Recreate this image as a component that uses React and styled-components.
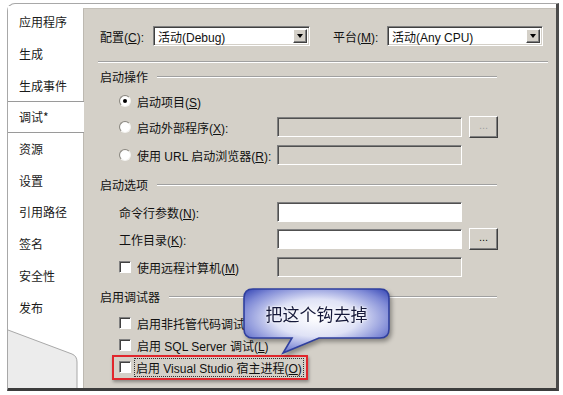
import styled, { createGlobalStyle } from "styled-components";

const GlobalStyle = createGlobalStyle`
  html, body {
    margin: 0;
    padding: 0;
    background: #ffffff;
  }
  body {
    font-family: "Liberation Sans", "Noto Sans CJK SC", sans-serif;
    font-size: 12px;
    color: #111;
  }
`;

const TABS = [
  "应用程序",
  "生成",
  "生成事件",
  "调试*",
  "资源",
  "设置",
  "引用路径",
  "签名",
  "安全性",
  "发布",
];

const App = () => {
  return (
    <Page>
      <GlobalStyle />
      <Frame>
        <TabList>
          {TABS.map((t) => (
            <Tab key={t} $active={t === "调试*"}>
              {t}
            </Tab>
          ))}
          <TabFoot>
            <svg width="75" height="64" viewBox="0 0 75 64">
              <path d="M0,6 L64,30 Q69,32 69,38 L69,64 L0,64 Z" fill="#ececec" />
              <path
                d="M0,6 L64,30 Q69,32 69,38 L69,64"
                fill="none"
                stroke="#a8a8a8"
                strokeWidth="1"
              />
            </svg>
          </TabFoot>
        </TabList>

        <Panel>
          <ConfigRow>
            <Label $w={53}>
              配置(<u>C</u>):
            </Label>
            <Combo $w={157}>
              <ComboText>活动(Debug)</ComboText>
              <ComboButton>
                <Arrow />
              </ComboButton>
            </Combo>
            <Label $w={54} style={{ marginLeft: 23 }}>
              平台(<u>M</u>):
            </Label>
            <Combo $w={156}>
              <ComboText>活动(Any CPU)</ComboText>
              <ComboButton>
                <Arrow />
              </ComboButton>
            </Combo>
          </ConfigRow>

          <Row $h={10}>
            <Separator />
          </Row>

          <Row $h={20}>
            <GroupHeader>
              <span>启动操作</span>
              <EtchedLine />
            </GroupHeader>
          </Row>

          <Row $h={30}>
            <FieldGrid>
              <Choice>
                <Radio $checked />
                <span>
                  启动项目(<u>S</u>)
                </span>
              </Choice>
            </FieldGrid>
          </Row>
          <Row $h={22}>
            <FieldGrid>
              <Choice>
                <Radio />
                <span>
                  启动外部程序(<u>X</u>):
                </span>
              </Choice>
              <TextBox />
              <Browse $disabled>...</Browse>
            </FieldGrid>
          </Row>
          <Row $h={34}>
            <FieldGrid>
              <Choice>
                <Radio />
                <span>
                  使用 URL 启动浏览器(<u>R</u>):
                </span>
              </Choice>
              <TextBox />
            </FieldGrid>
          </Row>

          <Row $h={24}>
            <GroupHeader>
              <span>启动选项</span>
              <EtchedLine />
            </GroupHeader>
          </Row>

          <Row $h={32}>
            <FieldGrid>
              <Choice>
                <span>
                  命令行参数(<u>N</u>):
                </span>
              </Choice>
              <TextBox $enabled />
            </FieldGrid>
          </Row>
          <Row $h={22}>
            <FieldGrid>
              <Choice>
                <span>
                  工作目录(<u>K</u>):
                </span>
              </Choice>
              <TextBox $enabled />
              <Browse>...</Browse>
            </FieldGrid>
          </Row>
          <Row $h={34}>
            <FieldGrid>
              <Choice>
                <CheckBox />
                <span>
                  使用远程计算机(<u>M</u>)
                </span>
              </Choice>
              <TextBox />
            </FieldGrid>
          </Row>

          <Row $h={24}>
            <GroupHeader>
              <span>启用调试器</span>
              <EtchedLine />
            </GroupHeader>
          </Row>

          <Row $h={30}>
            <Choice $pad={19}>
              <CheckBox />
              <span>启用非托管代码调试(<u>T</u>)</span>
            </Choice>
          </Row>
          <Row $h={14}>
            <Choice $pad={19}>
              <CheckBox />
              <span>
                启用 SQL Server 调试(<u>L</u>)
              </span>
            </Choice>
          </Row>
          <Row $h={30}>
            <Highlight>
              <CheckBox />
              <Focused>
                启用 Visual Studio 宿主进程(<u>O</u>)
              </Focused>
            </Highlight>
          </Row>

          <Callout>
            <svg width="150" height="70" viewBox="-2 -2 150 70">
              <defs>
                <radialGradient id="bubble" cx="50%" cy="45%" r="65%">
                  <stop offset="0%" stopColor="#ffffff" />
                  <stop offset="45%" stopColor="#dfe2f6" />
                  <stop offset="80%" stopColor="#7f8ad6" />
                  <stop offset="100%" stopColor="#3d4db8" />
                </radialGradient>
              </defs>
              <path
                d="M9,0 H136 Q145,0 145,9 V40 Q145,49 136,49 H75 L39,64 L48,49 H9 Q0,49 0,40 V9 Q0,0 9,0 Z"
                fill="url(#bubble)"
                stroke="#2f3f9e"
                strokeWidth="1.6"
              />
            </svg>
            <CalloutText>把这个钩去掉</CalloutText>
          </Callout>
        </Panel>
      </Frame>
    </Page>
  );
};

//styles
const Page = styled.div`
  width: 563px;
  height: 395px;
  padding: 3px 0 0 7px;
  box-sizing: border-box;
  background: #ffffff;
  overflow: hidden;
`;

const Frame = styled.div`
  display: flex;
  width: 552px;
  height: 388px;
  box-sizing: border-box;
  border-top: 1px solid #a8a8a8;
  border-left: 1px solid #a8a8a8;
  border-right: 3px solid #4a4a4a;
  border-bottom: 3px solid #3c3c3c;
  border-top-left-radius: 8px;
  background: #ffffff;
`;

const TabList = styled.div`
  width: 75px;
  flex: none;
  display: flex;
  flex-direction: column;
  padding-top: 2px;
  font-family: "Noto Sans CJK SC", sans-serif;
  font-size: 12px;
  color: #1a1a1a;
`;

const Tab = styled.div`
  height: 31.7px;
  box-sizing: border-box;
  display: flex;
  align-items: center;
  padding-left: 11px;
  margin-right: -1px;
  position: relative;
  background: #ffffff;
  border-top: 1px solid ${(p) => (p.$active ? "#9a9a9a" : "transparent")};
  border-bottom: 1px solid ${(p) => (p.$active ? "#9a9a9a" : "transparent")};
  z-index: ${(p) => (p.$active ? 1 : 0)};
`;

const TabFoot = styled.div`
  flex: 1;
  display: flex;
  align-items: flex-end;
  svg {
    display: block;
  }
`;

const Panel = styled.div`
  flex: 1;
  margin-top: 4px;
  position: relative;
  background: #d4d0c8;
  border-left: 1px solid #bdb9b1;
  border-top: 1px solid #c4c0b8;
  padding: 7px 0 0 16px;
  box-sizing: border-box;
`;

const Row = styled.div`
  height: ${(p) => p.$h}px;
  display: flex;
  align-items: center;
`;

const ConfigRow = styled(Row).attrs({ $h: 40 })``;

const Label = styled.span`
  width: ${(p) => p.$w}px;
  flex: none;
  white-space: nowrap;
`;

const Combo = styled.div`
  width: ${(p) => p.$w}px;
  height: 20px;
  box-sizing: border-box;
  display: flex;
  align-items: center;
  background: #ffffff;
  border: 1px solid;
  border-color: #808080 #ffffff #ffffff #808080;
  box-shadow: inset 1px 1px 0 #404040, inset -1px -1px 0 #d4d0c8;
  padding: 2px;
`;

const ComboText = styled.span`
  flex: 1;
  padding-left: 2px;
  white-space: nowrap;
`;

const ComboButton = styled.div`
  width: 14px;
  height: 14px;
  flex: none;
  display: flex;
  align-items: center;
  justify-content: center;
  background: #d4d0c8;
  border: 1px solid;
  border-color: #ffffff #404040 #404040 #ffffff;
  box-shadow: inset -1px -1px 0 #808080;
  box-sizing: border-box;
`;

const Arrow = styled.span`
  width: 0;
  height: 0;
  border-left: 3.5px solid transparent;
  border-right: 3.5px solid transparent;
  border-top: 4px solid #000;
`;

const Separator = styled.div`
  width: 450px;
  margin-left: -2px;
  height: 1px;
  background: #a0a0a0;
  box-shadow: 0 1px 0 #ffffff;
`;

const GroupHeader = styled.div`
  width: 397px;
  display: flex;
  align-items: center;
  gap: 9px;
  white-space: nowrap;
`;

const EtchedLine = styled.div`
  flex: 1;
  height: 1px;
  background: #a0a0a0;
  box-shadow: 0 1px 0 #ffffff;
`;

const FieldGrid = styled.div`
  display: grid;
  grid-template-columns: 151px 185px 29px;
  column-gap: 7px;
  align-items: center;
  padding-left: 19px;
`;

const Choice = styled.label`
  display: flex;
  align-items: center;
  gap: 6px;
  white-space: nowrap;
  padding-left: ${(p) => p.$pad || 0}px;
`;

const Radio = styled.span`
  width: 12px;
  height: 12px;
  flex: none;
  border-radius: 50%;
  box-sizing: border-box;
  background: radial-gradient(circle at 55% 55%, #ffffff 55%, #e6e4df 100%);
  border: 1px solid;
  border-color: #8a8780 #f4f3f0 #f4f3f0 #8a8780;
  display: flex;
  align-items: center;
  justify-content: center;
  &::after {
    content: "";
    width: 4px;
    height: 4px;
    border-radius: 50%;
    background: ${(p) => (p.$checked ? "#000" : "transparent")};
  }
`;

const CheckBox = styled.span`
  width: 12px;
  height: 12px;
  flex: none;
  box-sizing: border-box;
  background: #ffffff;
  border: 1px solid;
  border-color: #808080 #ffffff #ffffff #808080;
  box-shadow: inset 1px 1px 0 #404040;
`;

const TextBox = styled.div`
  height: 20px;
  box-sizing: border-box;
  background: ${(p) => (p.$enabled ? "#ffffff" : "#d4d0c8")};
  border: 1px solid;
  border-color: #808080 #ffffff #ffffff #808080;
  box-shadow: inset 1px 1px 0 #505050;
`;

const Browse = styled.div`
  width: 29px;
  height: 22px;
  box-sizing: border-box;
  display: flex;
  align-items: center;
  justify-content: center;
  background: #d4d0c8;
  border: 1px solid;
  border-color: #ffffff #404040 #404040 #ffffff;
  box-shadow: inset -1px -1px 0 #808080;
  color: ${(p) => (p.$disabled ? "#a0a0a0" : "#111")};
  font-size: 11px;
  line-height: 1;
  padding-bottom: 3px;
`;

const Highlight = styled.div`
  margin-left: 12px;
  width: 196px;
  height: 25px;
  box-sizing: border-box;
  display: flex;
  align-items: center;
  gap: 4px;
  padding-left: 5px;
  border: 2px solid #e1262c;
  box-shadow: 1px 2px 3px rgba(0, 0, 0, 0.35);
  white-space: nowrap;
`;

const Focused = styled.span`
  padding: 0 1px;
  outline: 1px dotted #333;
  outline-offset: 0;
`;

const Callout = styled.div`
  position: absolute;
  left: 158px;
  top: 278px;
  width: 150px;
  height: 70px;
  filter: drop-shadow(2px 3px 2px rgba(0, 0, 0, 0.35));
  svg {
    display: block;
  }
`;

const CalloutText = styled.div`
  position: absolute;
  left: 2px;
  top: 2px;
  width: 145px;
  height: 49px;
  display: flex;
  align-items: center;
  justify-content: center;
  font-family: "Noto Sans CJK SC", sans-serif;
  font-size: 17px;
  color: #15183a;
  text-shadow: 0 0 3px #ffffff, 0 0 2px #ffffff;
`;

export default App;
